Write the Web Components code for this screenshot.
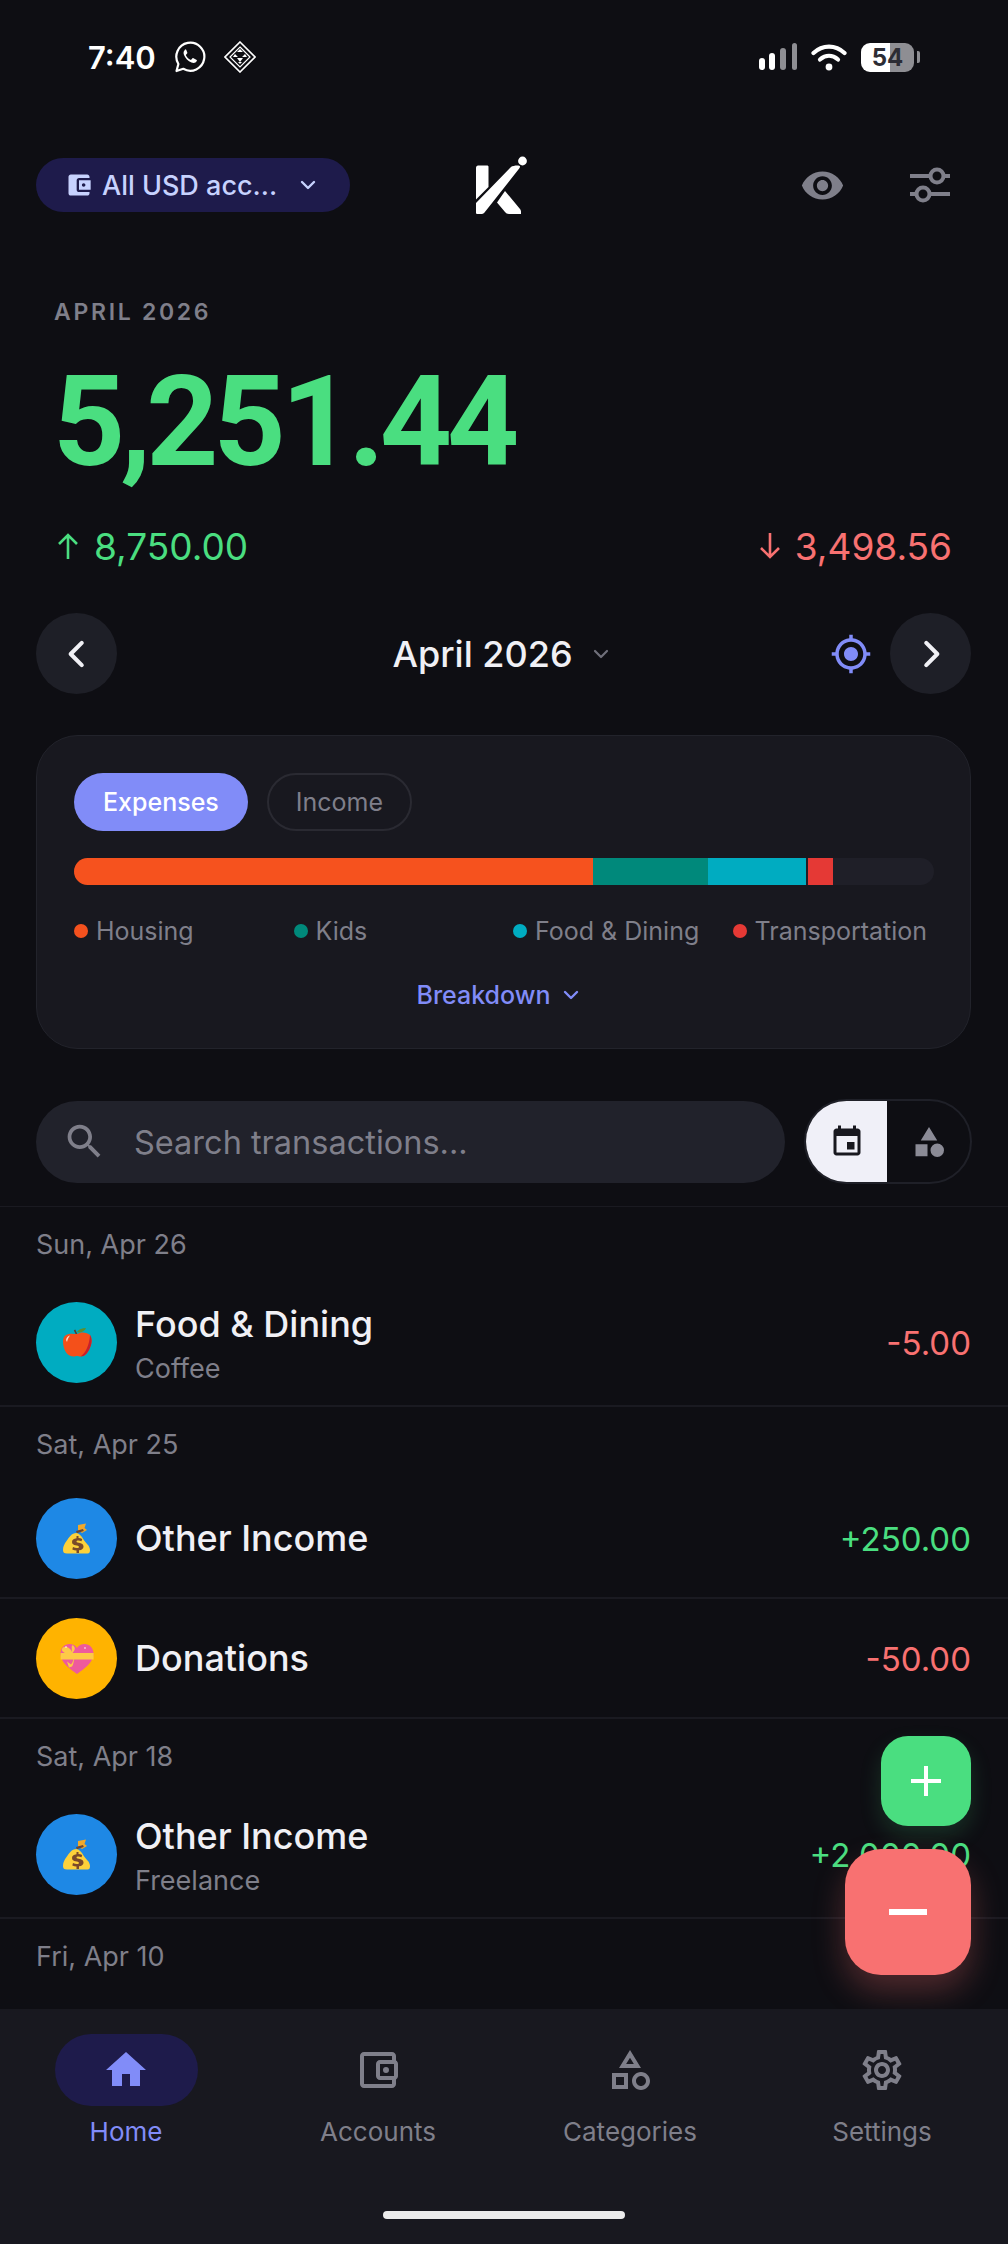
<!DOCTYPE html>
<html lang="en">
<head>
<meta charset="utf-8">
<title>Kharcha</title>
<style>
    html, body { margin: 0; padding: 0; background: #0e0e13; }
</style>
</head>
<body>
<app-shell>
    <status-bar></status-bar>
    <top-bar>All USD acc...</top-bar>
    <balance-summary label="APRIL 2026" total="5,251.44" income="8,750.00" expense="3,498.56"></balance-summary>
    <month-nav>April 2026</month-nav>
    <spend-card></spend-card>
    <search-row></search-row>
    <tx-list>
        <tx-date>Sun, Apr 26</tx-date>
        <tx-row color="#00acc1" emoji="apple" tone="out">Food &amp; Dining<span slot="sub">Coffee</span><span slot="amount">-5.00</span></tx-row>
        <tx-date>Sat, Apr 25</tx-date>
        <tx-row color="#1e88e5" emoji="bag" tone="in">Other Income<span slot="amount">+250.00</span></tx-row>
        <tx-row color="#ffb300" emoji="heart" tone="out" plain>Donations<span slot="amount">-50.00</span></tx-row>
        <tx-date>Sat, Apr 18</tx-date>
        <tx-row color="#1e88e5" emoji="bag" tone="in">Other Income<span slot="sub">Freelance</span><span slot="amount">+2,000.00</span></tx-row>
        <tx-date>Fri, Apr 10</tx-date>
        <fab-stack></fab-stack>
    </tx-list>
    <bottom-nav></bottom-nav>
</app-shell>

<script>
const FONT = `Inter, "Noto Sans", "Liberation Sans", sans-serif`;

// material style icon paths, all on a 24 box
const ICONS = {
    walletFill: 'M21 18v1c0 1.1-.9 2-2 2H5c-1.11 0-2-.9-2-2V5c0-1.1.89-2 2-2h14c1.1 0 2 .9 2 2v1h-9c-1.11 0-2 .9-2 2v8c0 1.1.89 2 2 2h9zm-9-2h10V8H12v8zm4-2.5c-.83 0-1.5-.67-1.5-1.5s.67-1.5 1.5-1.5 1.5.67 1.5 1.5-.67 1.5-1.5 1.5z',
    wallet: 'M21 7.28V5c0-1.1-.9-2-2-2H5c-1.11 0-2 .9-2 2v14c0 1.1.89 2 2 2h14c1.1 0 2-.9 2-2v-2.28c.59-.35 1-.98 1-1.72V9c0-.74-.41-1.38-1-1.72zM20 9v6h-7V9h7zM5 19V5h14v2h-6c-1.1 0-2 .9-2 2v6c0 1.1.9 2 2 2h6v2H5zM16 13.5a1.5 1.5 0 1 0 0-3 1.5 1.5 0 0 0 0 3z',
    eye: 'M12 4.5C7 4.5 2.73 7.61 1 12c1.73 4.39 6 7.5 11 7.5s9.27-3.11 11-7.5c-1.73-4.39-6-7.5-11-7.5zM12 17c-2.76 0-5-2.24-5-5s2.24-5 5-5 5 2.24 5 5-2.24 5-5 5zm0-8c-1.66 0-3 1.34-3 3s1.34 3 3 3 3-1.34 3-3-1.34-3-3-3z',
    gps: 'M12 8c-2.21 0-4 1.79-4 4s1.79 4 4 4 4-1.79 4-4-1.79-4-4-4zm8.94 3c-.46-4.17-3.77-7.48-7.94-7.94V1h-2v2.06C6.83 3.52 3.52 6.83 3.06 11H1v2h2.06c.46 4.17 3.77 7.48 7.94 7.94V23h2v-2.06c4.17-.46 7.48-3.77 7.94-7.94H23v-2h-2.06zM12 19c-3.87 0-7-3.13-7-7s3.13-7 7-7 7 3.13 7 7-3.13 7-7 7z',
    search: 'M15.5 14h-.79l-.28-.27C15.41 12.59 16 11.11 16 9.5 16 5.91 13.09 3 9.5 3S3 5.91 3 9.5 5.91 16 9.5 16c1.61 0 3.09-.59 4.23-1.57l.27.28v.79l5 4.99L20.49 19l-4.99-5zm-6 0C7.01 14 5 11.99 5 9.5S7.01 5 9.5 5 14 7.01 14 9.5 11.99 14 9.5 14z',
    event: 'M17 12h-5v5h5v-5zM16 1v2H8V1H6v2H5c-1.11 0-1.99.9-1.99 2L3 19c0 1.1.89 2 2 2h14c1.1 0 2-.9 2-2V5c0-1.1-.9-2-2-2h-1V1h-2zm3 18H5V8h14v11z',
    shapesFill: 'M12 2l-5.5 9h11zM17.500 13a4.500 4.500 0 1 0 0 9 4.500 4.500 0 0 0 0-9zM3 13.500h8v8H3z',
    shapes: 'M12 2l-5.5 9h11L12 2zm0 3.84L13.93 9h-3.87L12 5.84zM17.5 13c-2.49 0-4.5 2.01-4.5 4.5s2.01 4.5 4.5 4.5 4.5-2.01 4.5-4.5-2.01-4.5-4.5-4.5zm0 7c-1.38 0-2.5-1.12-2.5-2.5s1.12-2.5 2.5-2.5 2.5 1.12 2.5 2.5-1.12 2.5-2.5 2.5zM3 21.5h8v-8H3v8zm2-6h4v4H5v-4z',
    home: 'M10 20v-6h4v6h5v-8h3L12 3 2 12h3v8z',
    gear: 'M19.43 12.98c.04-.32.07-.64.07-.98 0-.34-.03-.66-.07-.98l2.11-1.65c.19-.15.24-.42.12-.64l-2-3.46c-.09-.16-.26-.25-.44-.25-.06 0-.12.01-.17.03l-2.49 1c-.52-.4-1.08-.73-1.69-.98l-.38-2.65C14.46 2.18 14.25 2 14 2h-4c-.25 0-.46.18-.49.42l-.38 2.65c-.61.25-1.17.59-1.69.98l-2.49-1c-.06-.02-.12-.03-.18-.03-.17 0-.34.09-.43.25l-2 3.46c-.13.22-.07.49.12.64l2.11 1.65c-.04.32-.07.65-.07.98 0 .33.03.66.07.98l-2.11 1.65c-.19.15-.24.42-.12.64l2 3.46c.09.16.26.25.44.25.06 0 .12-.01.17-.03l2.49-1c.52.4 1.08.73 1.69.98l.38 2.65c.03.24.24.42.49.42h4c.25 0 .46-.18.49-.42l.38-2.65c.61-.25 1.17-.59 1.69-.98l2.49 1c.06.02.12.03.18.03.17 0 .34-.09.43-.25l2-3.46c.12-.22.07-.49-.12-.64l-2.11-1.65zm-1.98-1.71c.04.31.05.52.05.73 0 .21-.02.43-.05.73l-.14 1.13.89.7 1.08.84-.7 1.21-1.27-.51-1.04-.42-.9.68c-.43.32-.84.56-1.25.73l-1.06.43-.16 1.13-.2 1.35h-1.4l-.19-1.35-.16-1.13-1.06-.43c-.43-.18-.83-.41-1.23-.71l-.91-.7-1.06.43-1.27.51-.7-1.21 1.08-.84.89-.7-.14-1.13c-.03-.31-.05-.54-.05-.74s.02-.43.05-.73l.14-1.13-.89-.7-1.08-.84.7-1.21 1.27.51 1.04.42.9-.68c.43-.32.84-.56 1.25-.73l1.06-.43.16-1.13.2-1.35h1.39l.19 1.35.16 1.13 1.06.43c.43.18.83.41 1.23.71l.91.7 1.06-.43 1.27-.51.7 1.21-1.07.85-.89.7.14 1.13zM12 8c-2.21 0-4 1.79-4 4s1.79 4 4 4 4-1.79 4-4-1.79-4-4-4zm0 6c-1.1 0-2-.9-2-2s.9-2 2-2 2 .9 2 2-.9 2-2 2z'
};

const icon = (name, size, color) =>
    `<svg width="${size}" height="${size}" viewBox="0 0 24 24" fill="${color}" style="display:block;flex:none"><path d="${ICONS[name]}"/></svg>`;

const chevron = (dir, size, color, sw = 2.4) => {
    const paths = {
        down: 'M6 9l6 6 6-6',
        left: 'M15 5l-7 7 7 7',
        right: 'M9 5l7 7-7 7'
    };
    return `<svg width="${size}" height="${size}" viewBox="0 0 24 24" fill="none" stroke="${color}" stroke-width="${sw}" stroke-linecap="round" stroke-linejoin="round" style="display:block;flex:none"><path d="${paths[dir]}"/></svg>`;
};

// the three category emoji, drawn by hand
const EMOJI = {
    apple: `<svg width="32" height="32" viewBox="0 0 32 32" style="display:block">
        <path d="M15.500 7c-1-2-1.400-3-2-4" stroke="#5d3a2a" stroke-width="1.600" fill="none"/>
        <path d="M16 5c2-3 5-4 9-4-1 3-5 5.500-9 4z" fill="#5c8f2f"/>
        <path d="M16 7c4-2.500 10-2 13 1 2.500 3.500 2 9-.5 14-2 4-4.500 7.500-9 7.500-1.500 0-2-.5-3.500-.5s-2 .5-3.500.5c-5 0-8-4-9.500-8.500C1.500 15 1.500 10 5 8c3.500-2 8-1 11-1z" fill="#f4501a"/>
        <path d="M29 8c2.500 3.500 2 9-.5 14-2 4-4.500 7.500-9 7.500 5-3 9-12 9.500-21.500z" fill="#c8202c"/>
        <path d="M5 13c.5-2.500 2-4 4-4.500-1.500 2-2.500 4-3 6.500z" fill="#ffd9c8"/>
    </svg>`,
    bag: `<svg width="32" height="32" viewBox="0 0 32 32" style="display:block">
        <path d="M17 2l8-1.500-1.500 4.500L26 7l-5 3-4-3z" fill="#f0a92c"/>
        <path d="M15 8l7-2 .8 2-7 2.300z" fill="#6d4530"/>
        <path d="M15.500 10c3 .5 5 3 7 6.500s6.500 6 6.500 10.500c0 3-1 3.500-4 3.500H6c-3 0-4-1-4-3.500 0-4 1.500-6 3.500-9 2.500-3.500 5-8 10-8z" fill="#fdd13a"/>
        <path d="M15.500 13v2.200c-3 .2-4.500 1.700-4.500 3.700 0 4.600 7 2.500 7 5 0 1.500-3.500 1.300-6 .2l-.7 2.300c1.300.6 2.800.9 4.200 1V30h2.500v-2.700c3-.4 4.500-1.900 4.500-3.900 0-4.700-7-2.600-7-4.900 0-1.400 2.800-1.100 5-.3l.7-2.300c-1.200-.4-2.500-.7-3.700-.8V13z" fill="#7a4a2a"/>
    </svg>`,
    heart: `<svg width="34" height="32" viewBox="0 0 34 32" style="display:block">
        <path d="M17 31C10 26 1 20 .5 11 .3 5 4.500 1 9.500 1c3.200 0 6 1.500 7.500 4 1.500-2.500 4.300-4 7.500-4 5 0 9.200 4 9 10C33 20 24 26 17 31z" fill="#ee5a9d"/>
        <path d="M.6 10h33v6.500h-33z" fill="#fdca47"/>
        <path d="M12 9c-2-5-8-7-10-3-1 3 5 5.500 10 5.500 0 0 3.500 5-1 10l-4-3 2 6 3-1c3-5 2-10 0-13 3-3 4-6 1-8-2-1-1 4-1 6.500z" fill="#fdca47"/>
        <circle cx="6" cy="4" r=".8" fill="#fff"/><circle cx="25" cy="5" r=".8" fill="#fff"/>
    </svg>`
};

class AppShell extends HTMLElement {
    constructor() {
        super();
        this.attachShadow({ mode: 'open' });
        this.shadowRoot.innerHTML = `
            <style>
                :host {
                    display: flex;
                    flex-direction: column;
                    width: 1008px;
                    height: 2244px;
                    overflow: hidden;
                    background: #0e0e13;
                    color: #f0f0f5;
                    font-family: ${FONT};
                }
            </style>
            <slot></slot>`;
    }
}

class StatusBar extends HTMLElement {
    constructor() {
        super();
        this.attachShadow({ mode: 'open' });
        this.shadowRoot.innerHTML = `
            <style>
                :host {
                    display: flex;
                    align-items: center;
                    justify-content: space-between;
                    height: 114px;
                    padding: 0 88px;
                    box-sizing: border-box;
                    flex: none;
                }
                .side { display: flex; align-items: center; }
                .time { font-size: 31px; font-weight: 600; color: #fff; width: 86px; }
                .battery {
                    display: flex;
                    align-items: center;
                    justify-content: center;
                    width: 53px;
                    height: 29px;
                    border-radius: 9px;
                    background: linear-gradient(90deg, #fff 0 29px, #8e8e93 29px);
                    color: #2c2c34;
                    font-size: 24px;
                    font-weight: 700;
                    margin-left: 14px;
                }
                .nub { width: 3px; height: 12px; margin-left: 3px; border-radius: 0 2px 2px 0; background: #8e8e93; }
            </style>
            <div class="side">
                <span class="time">7:40</span>
                <svg width="32" height="32" viewBox="0 0 32 32" fill="none" stroke="#fff" stroke-width="2.200" style="display:block">
                    <path d="M2.500 30l1.900-7A14 14 0 1 1 9.300 27.800z" stroke-linejoin="round"/>
                    <path d="M11.500 8.500c-1.800 1-2.500 3-1.500 5.500 1.300 3.200 4 6 7.500 7.500 2.400 1 4.300.3 5.300-1.500.3-.6 0-1-.5-1.300l-2.800-1.500c-.5-.2-.9-.1-1.200.3l-.9 1.100c-.3.3-.6.4-1 .2-2-.9-3.500-2.400-4.400-4.300-.2-.4-.1-.7.2-1l.9-1c.3-.3.3-.7.2-1.100l-1.100-2.700c-.3-.6-.9-.7-1.700-.2z" fill="#fff" stroke="none"/>
                </svg>
                <svg width="32" height="32" viewBox="0 0 32 32" fill="none" stroke="#fff" stroke-width="1.600" style="display:block;margin-left:18px">
                    <path d="M16 1l15 15-15 15L1 16z"/>
                    <path d="M16 6l10 10-10 10L6 16z" stroke-width="1.200"/>
                    <path d="M16 8l-3 3h6zM11 13l-2 3h5zM21 13l-3 3h5zM13 17l3 4 3-4zM16 23l-2-2h4z" fill="#fff" stroke="none"/>
                </svg>
            </div>
            <div class="side">
                <svg width="39" height="28" viewBox="0 0 39 28" style="display:block">
                    <rect x="0" y="15" width="6" height="12" rx="3" fill="#fff"/>
                    <rect x="10" y="10" width="6" height="17" rx="3" fill="#fff"/>
                    <rect x="21" y="5" width="6" height="22" rx="3" fill="#8e8e93"/>
                    <rect x="33" y="0" width="5" height="27" rx="2.500" fill="#8e8e93"/>
                </svg>
                <svg width="36" height="28" viewBox="0 0 36 28" fill="none" stroke="#fff" stroke-width="4.200" stroke-linecap="round" style="display:block;margin-left:13px">
                    <path d="M2.500 10c9-8.500 22-8.500 31 0"/>
                    <path d="M9 16.500c5.500-4.800 12.500-4.800 18 0"/>
                    <circle cx="18" cy="24" r="3.400" fill="#fff" stroke="none"/>
                </svg>
                <div class="battery">54</div>
                <div class="nub"></div>
            </div>`;
    }
}

class TopBar extends HTMLElement {
    constructor() {
        super();
        this.attachShadow({ mode: 'open' });
        this.shadowRoot.innerHTML = `
            <style>
                :host {
                    display: grid;
                    grid-template-columns: 1fr auto 1fr;
                    align-items: center;
                    height: 58px;
                    margin-top: 42px;
                    padding: 0 58px 0 36px;
                    flex: none;
                }
                .pill {
                    display: flex;
                    align-items: center;
                    justify-self: start;
                    width: 314px;
                    height: 54px;
                    box-sizing: border-box;
                    padding: 0 30px 0 29px;
                    border-radius: 27px;
                    background: #1e1b4b;
                    color: #c7d2fe;
                    font-size: 27px;
                    font-weight: 500;
                    white-space: nowrap;
                }
                .pill svg:first-child { margin-right: 9px; }
                .name { flex: 1; }
                .logo { margin-right: -16px; }
                .actions { display: flex; align-items: center; justify-content: flex-end; gap: 65px; }
            </style>
            <div class="pill">
                ${icon('walletFill', 28, '#c7d2fe')}
                <span class="name"><slot></slot></span>
                ${chevron('down', 24, '#c7d2fe')}
            </div>
            <svg class="logo" width="51" height="58" viewBox="0 0 51 58" style="display:block">
                <path d="M2 9.500h9c1 0 1.500.5 1.500 1.500v20L0 43.500V11.500C0 10.500 1 9.500 2 9.500z" fill="#fff"/>
                <path d="M0 47L35 11c2-1.500 9-2 9-.5 0 1-.5 1.500-1 2.200L8.500 56.500c-1 1-2 1.500-4 1.500H1.500C.5 58 0 57.500 0 56.500z" fill="#fff"/>
                <path d="M29 35l15 18c.5.8 1 1.500 1 2.500V58H33c-2 0-3-.8-4-2L21 46.500z" fill="#fff"/>
                <circle cx="46.500" cy="5" r="4.400" fill="#fff"/>
            </svg>
            <div class="actions">
                ${icon('eye', 45, '#7f7f8a')}
                <svg width="40" height="36" viewBox="0 0 40 36" fill="none" stroke="#7f7f8a" stroke-width="4" style="display:block">
                    <path d="M0 9h20M34 9h6M0 27h6M20 27h20"/>
                    <circle cx="27" cy="9" r="6.500"/>
                    <circle cx="13" cy="27" r="6.500"/>
                </svg>
            </div>`;
    }
}

class BalanceSummary extends HTMLElement {
    constructor() {
        super();
        this.attachShadow({ mode: 'open' });
    }

    connectedCallback() {
        const get = name => this.getAttribute(name) || '';
        const arrow = (d, color) => `<svg width="24" height="26" viewBox="0 0 24 26" fill="none" stroke="${color}" stroke-width="2.600" style="display:block"><path d="${d}"/></svg>`;

        this.shadowRoot.innerHTML = `
            <style>
                :host {
                    display: block;
                    padding: 0 56px;
                    margin-top: 83px;
                    flex: none;
                }
                .label {
                    height: 30px;
                    line-height: 30px;
                    margin-left: -2px;
                    font-size: 23px;
                    font-weight: 600;
                    letter-spacing: 2.700px;
                    color: #7f7f8a;
                }
                .total {
                    margin: 20px 0 0 -3px;
                    height: 150px;
                    line-height: 150px;
                    font-family: Roboto, ${FONT};
                    font-size: 126px;
                    font-weight: 700;
                    color: #4ade80;
                    letter-spacing: -5px;
                }
                .flows {
                    display: flex;
                    justify-content: space-between;
                    align-items: center;
                    margin-top: 27px;
                    height: 44px;
                    font-size: 37px;
                }
                .flow { display: flex; align-items: center; gap: 13px; }
                .flow.in { gap: 14px; }
                .in { color: #4ade80; }
                .out { color: #f87171; }
            </style>
            <div class="label">${get('label')}</div>
            <div class="total">${get('total')}</div>
            <div class="flows">
                <div class="flow in">${arrow('M12 26V2M3 11l9-9 9 9', '#4ade80')}<span>${get('income')}</span></div>
                <div class="flow out">${arrow('M12 0v24M3 15l9 9 9-9', '#f87171')}<span>${get('expense')}</span></div>
            </div>`;
    }
}

class MonthNav extends HTMLElement {
    constructor() {
        super();
        this.attachShadow({ mode: 'open' });
        this.shadowRoot.innerHTML = `
            <style>
                :host {
                    display: grid;
                    grid-template-columns: 1fr auto 1fr;
                    align-items: center;
                    margin-top: 45px;
                    padding: 0 37px 0 36px;
                    flex: none;
                }
                .round {
                    display: flex;
                    align-items: center;
                    justify-content: center;
                    width: 81px;
                    height: 81px;
                    border-radius: 50%;
                    background: #1e1f27;
                }
                .month {
                    display: flex;
                    align-items: center;
                    gap: 16px;
                    font-size: 36px;
                    font-weight: 500;
                    color: #f0f0f5;
                    margin-left: -2px;
                }
                .right { display: flex; align-items: center; justify-content: flex-end; gap: 18px; }
            </style>
            <div class="round">${chevron('left', 38, '#f0f0f5', 2.6)}</div>
            <div class="month"><span><slot></slot></span>${chevron('down', 24, '#6f6f7a', 2.2)}</div>
            <div class="right">
                ${icon('gps', 42, '#818cf8')}
                <div class="round">${chevron('right', 38, '#f0f0f5', 2.6)}</div>
            </div>`;
    }
}

class SpendCard extends HTMLElement {
    constructor() {
        super();
        this.attachShadow({ mode: 'open' });
        const legend = [['Housing', '#f4511e'], ['Kids', '#00897b'], ['Food &amp; Dining', '#00acc1'], ['Transportation', '#e53935']];
        this.shadowRoot.innerHTML = `
            <style>
                :host {
                    display: block;
                    margin: 41px 37px 0 36px;
                    height: 314px;
                    box-sizing: border-box;
                    padding: 37px 37px 0 37px;
                    background: #18181f;
                    border: 1px solid #22232b;
                    border-radius: 42px;
                    flex: none;
                }
                .tabs { display: flex; gap: 19px; }
                .tab {
                    display: flex;
                    align-items: center;
                    height: 58px;
                    box-sizing: border-box;
                    padding: 0 29px;
                    border-radius: 29px;
                    font-size: 25px;
                    font-weight: 500;
                }
                .tab.on { background: #818cf8; color: #fff; }
                .tab.off { border: 2px solid #2a2a32; color: #7f7f8a; font-weight: 400; padding: 0 27px; }
                .bar {
                    display: flex;
                    margin-top: 27px;
                    width: 860px;
                    height: 27px;
                    border-radius: 14px;
                    overflow: hidden;
                    background: #1f1f28;
                }
                .bar div { height: 100%; flex: none; }
                .legend {
                    display: grid;
                    grid-template-columns: repeat(4, 201.500px);
                    column-gap: 18px;
                    margin-top: 29px;
                    height: 34px;
                }
                .item {
                    display: flex;
                    align-items: center;
                    gap: 8px;
                    font-size: 25px;
                    color: #7f7f8a;
                    white-space: nowrap;
                }
                .dot { width: 14px; height: 14px; border-radius: 50%; flex: none; }
                .more {
                    display: flex;
                    align-items: center;
                    justify-content: center;
                    gap: 8px;
                    margin: 29px 0 0 -8px;
                    height: 36px;
                    font-size: 25px;
                    font-weight: 500;
                    color: #818cf8;
                }
            </style>
            <div class="tabs">
                <div class="tab on">Expenses</div>
                <div class="tab off">Income</div>
            </div>
            <div class="bar">
                <div style="width:519px;background:#f6521e"></div>
                <div style="width:115px;background:#00897b"></div>
                <div style="width:98px;background:#00acc1"></div>
                <div style="width:2px"></div>
                <div style="width:25px;background:#e53935"></div>
            </div>
            <div class="legend">
                ${legend.map(l => `<div class="item"><span class="dot" style="background:${l[1]}"></span><span>${l[0]}</span></div>`).join('')}
            </div>
            <div class="more"><span>Breakdown</span>${chevron('down', 24, '#818cf8')}</div>`;
    }
}

class SearchRow extends HTMLElement {
    constructor() {
        super();
        this.attachShadow({ mode: 'open' });
        this.shadowRoot.innerHTML = `
            <style>
                :host {
                    display: flex;
                    align-items: center;
                    justify-content: space-between;
                    margin-top: 50px;
                    padding: 0 36px 22px 36px;
                    border-bottom: 1px solid #1a1a21;
                    flex: none;
                }
                .field {
                    display: flex;
                    align-items: center;
                    gap: 27px;
                    width: 749px;
                    height: 82px;
                    box-sizing: border-box;
                    padding-left: 26px;
                    border-radius: 41px;
                    background: #21222b;
                    font-size: 32.500px;
                    color: #7f7f8a;
                }
                .field span { padding-top: 2px; }
                .toggle {
                    display: flex;
                    width: 168px;
                    height: 85px;
                    box-sizing: border-box;
                    border: 2px solid #1f2028;
                    border-radius: 43px;
                    overflow: hidden;
                }
                .toggle div { display: flex; align-items: center; justify-content: center; }
                .a { width: 81px; background: #f0f0f8; }
                .b { flex: 1; }
            </style>
            <div class="field">
                ${icon('search', 45, '#7f7f8a')}
                <span>Search transactions...</span>
            </div>
            <div class="toggle">
                <div class="a">${icon('event', 36, '#18181f')}</div>
                <div class="b">${icon('shapesFill', 36, '#8b8b96')}</div>
            </div>`;
    }
}

class TxList extends HTMLElement {
    constructor() {
        super();
        this.attachShadow({ mode: 'open' });
        this.shadowRoot.innerHTML = `
            <style>
                :host { display: block; position: relative; flex: 1; min-height: 0; overflow: hidden; }
            </style>
            <slot></slot>`;
    }
}

class TxDate extends HTMLElement {
    constructor() {
        super();
        this.attachShadow({ mode: 'open' });
        this.shadowRoot.innerHTML = `
            <style>
                :host {
                    display: flex;
                    align-items: center;
                    height: 70px;
                    padding: 2px 36px 0;
                    font-size: 27px;
                    color: #7f7f8a;
                }
            </style>
            <slot></slot>`;
    }
}

class TxRow extends HTMLElement {
    constructor() {
        super();
        this.attachShadow({ mode: 'open' });
    }

    connectedCallback() {
        const color = this.getAttribute('color');
        const tone = this.getAttribute('tone') === 'in' ? '#4ade80' : '#f87171';
        const emoji = EMOJI[this.getAttribute('emoji')] || '';

        this.shadowRoot.innerHTML = `
            <style>
                :host {
                    display: flex;
                    align-items: center;
                    gap: 18px;
                    padding: 19px 37px 18px 36px;
                    border-bottom: 2px solid #1a1a21;
                }
                .avatar {
                    display: flex;
                    align-items: center;
                    justify-content: center;
                    width: 81px;
                    height: 81px;
                    border-radius: 50%;
                    flex: none;
                    background: ${color};
                }
                .text { flex: 1; min-width: 0; }
                .name { line-height: 53px; font-size: 36px; font-weight: 500; color: #f0f0f5; }
                .sub { line-height: 36px; font-size: 27px; color: #7f7f8a; }
                .amount { font-size: 33px; color: ${tone}; }
                .none { display: none; }
            </style>
            <div class="avatar">${emoji}</div>
            <div class="text">
                <div class="name"><slot></slot></div>
                <div class="sub ${this.querySelector('[slot=sub]') ? '' : 'none'}"><slot name="sub"></slot></div>
            </div>
            <div class="amount"><slot name="amount"></slot></div>`;
    }
}

class BottomNav extends HTMLElement {
    constructor() {
        super();
        this.attachShadow({ mode: 'open' });
        const tabs = [
            ['Home', icon('home', 48, '#818cf8'), true],
            ['Accounts', icon('wallet', 48, '#7f7f8a')],
            ['Categories', icon('shapes', 48, '#7f7f8a')],
            ['Settings', icon('gear', 48, '#7f7f8a')]
        ];
        this.shadowRoot.innerHTML = `
            <style>
                :host {
                    display: flex;
                    flex-direction: column;
                    align-items: center;
                    height: 235px;
                    box-sizing: border-box;
                    padding-top: 25px;
                    background: #18181f;
                    flex: none;
                }
                .tabs { display: grid; grid-template-columns: repeat(4, 252px); }
                .tab { display: flex; flex-direction: column; align-items: center; gap: 10px; font-size: 26px; color: #7f7f8a; }
                .tab.on { color: #818cf8; }
                .box { display: flex; align-items: center; justify-content: center; width: 143px; height: 72px; border-radius: 36px; }
                .on .box { background: #1e1b4b; }
                .indicator { width: 242px; height: 8px; border-radius: 4px; background: #ececec; margin-top: 64px; }
            </style>
            <div class="tabs">
                ${tabs.map(t => `<div class="tab ${t[2] ? 'on' : ''}"><div class="box">${t[1]}</div><span>${t[0]}</span></div>`).join('')}
            </div>
            <div class="indicator"></div>`;
    }
}

class FabStack extends HTMLElement {
    constructor() {
        super();
        this.attachShadow({ mode: 'open' });
        this.shadowRoot.innerHTML = `
            <style>
                :host {
                    display: flex;
                    flex-direction: column;
                    align-items: flex-end;
                    gap: 23px;
                    position: absolute;
                    right: 37px;
                    bottom: 34px;
                }
                .fab { display: flex; align-items: center; justify-content: center; }
                .plus {
                    width: 90px;
                    height: 90px;
                    border-radius: 27px;
                    background: #4ade80;
                    box-shadow: 0 10px 22px rgba(74, 222, 128, 0.16);
                }
                .minus {
                    width: 126px;
                    height: 126px;
                    border-radius: 36px;
                    background: #f87171;
                    box-shadow: 0 16px 32px rgba(248, 113, 113, 0.28);
                }
            </style>
            <div class="fab plus">
                <svg width="30" height="30" viewBox="0 0 30 30" stroke="#fff" stroke-width="4" style="display:block"><path d="M15 0v30M0 15h30"/></svg>
            </div>
            <div class="fab minus">
                <svg width="38" height="6" viewBox="0 0 38 6" style="display:block"><rect width="38" height="6" fill="#fff"/></svg>
            </div>`;
    }
}

customElements.define('app-shell', AppShell);
customElements.define('status-bar', StatusBar);
customElements.define('top-bar', TopBar);
customElements.define('balance-summary', BalanceSummary);
customElements.define('month-nav', MonthNav);
customElements.define('spend-card', SpendCard);
customElements.define('search-row', SearchRow);
customElements.define('tx-list', TxList);
customElements.define('tx-date', TxDate);
customElements.define('tx-row', TxRow);
customElements.define('bottom-nav', BottomNav);
customElements.define('fab-stack', FabStack);
</script>
</body>
</html>
